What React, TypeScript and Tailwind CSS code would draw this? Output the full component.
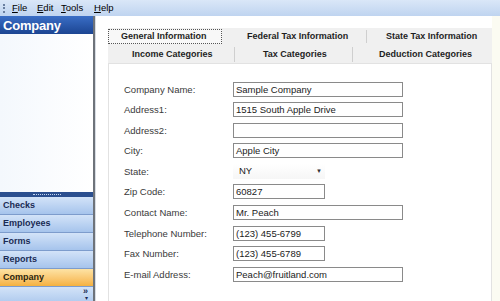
import React from "react";

const rows = [
  { label: "Company Name:", value: "Sample Company", w: "w-[170px]", h: "h-[20px]" },
  { label: "Address1:", value: "1515 South Apple Drive", w: "w-[170px]", h: "h-[21px]" },
  { label: "Address2:", value: "", w: "w-[170px]", h: "h-[20px]" },
  { label: "City:", value: "Apple City", w: "w-[170px]", h: "h-[21px]" },
  { label: "State:", value: "NY", w: "w-[92px]", h: "h-[20px]", combo: true },
  { label: "Zip Code:", value: "60827", w: "w-[92px]", h: "h-[21px]" },
  { label: "Contact Name:", value: "Mr. Peach", w: "w-[170px]", h: "h-[21px]" },
  { label: "Telephone Number:", value: "(123) 455-6799", w: "w-[92px]", h: "h-[20px]" },
  { label: "Fax Number:", value: "(123) 455-6789", w: "w-[92px]", h: "h-[21px]" },
  { label: "E-mail Address:", value: "Peach@fruitland.com", w: "w-[170px]", h: "h-[21px]" },
];

const navs = ["Checks", "Employees", "Forms", "Reports"];

function MenuItem({ first, rest, w }: { first: string; rest: string; w: string }) {
  return (
    <span className={`${w} text-[9.5px] text-black`}>
      <span className="underline">{first}</span>
      {rest}
    </span>
  );
}

export default function App() {
  return (
    <div
      className="w-[500px] h-[301px] overflow-hidden flex flex-col bg-white"
      style={{ fontFamily: "'Liberation Sans', Arial, sans-serif" }}
    >
      {/* Menu bar */}
      <div className="h-[16px] shrink-0 flex items-center bg-gradient-to-b from-[#dae7f8] to-[#bfd4f0] pl-[3px]">
        <div className="w-[2px] h-[9px] border-l-[2px] border-dotted border-[#6a7fa0] mr-[7px]" />
        <div className="flex items-center">
          <MenuItem first="F" rest="ile" w="w-[25px]" />
          <MenuItem first="E" rest="dit" w="w-[24px]" />
          <MenuItem first="T" rest="ools" w="w-[33px]" />
          <MenuItem first="H" rest="elp" w="w-[30px]" />
        </div>
      </div>

      <div className="flex flex-1 min-h-0">
        {/* Sidebar */}
        <div className="w-[93px] shrink-0 flex flex-col">
          <div className="h-[18px] shrink-0 bg-gradient-to-b from-[#3a6ec6] to-[#1c4592] flex items-center pl-[3px]">
            <span className="text-white font-bold text-[13px] leading-none tracking-[-0.2px]">Company</span>
          </div>
          <div className="flex-1 bg-gradient-to-r from-[#f4f8fd] to-white" />
          <div className="h-[5px] shrink-0 bg-[#2b4f8f] flex items-center justify-center">
            <div className="w-[28px] h-[1px] border-t border-dotted border-[#c5d6f0]" />
          </div>
          {navs.map((n) => (
            <div
              key={n}
              className="h-[18px] shrink-0 flex items-center pl-[3px] bg-gradient-to-b from-[#d3e3f8] to-[#a6c4ec] border-b border-[#7d9ccc]"
            >
              <span className="font-bold text-[9px] text-[#1a2b54]">{n}</span>
            </div>
          ))}
          <div className="h-[18px] shrink-0 flex items-center pl-[3px] bg-gradient-to-b from-[#fde3a4] to-[#f5b13e] border-b border-[#7d9ccc]">
            <span className="font-bold text-[9px] text-[#2a2410]">Company</span>
          </div>
          <div className="h-[14px] shrink-0 bg-gradient-to-b from-[#d3e3f8] to-[#b3cdef] flex flex-col items-end pr-[5px] leading-none">
            <span className="text-[9px] font-bold text-[#1a2b54] leading-[9px]">»</span>
            <span className="text-[6px] text-[#1a2b54] leading-[5px]">▾</span>
          </div>
        </div>

        {/* splitter border */}
        <div className="w-[2px] shrink-0 bg-[#6e737a]" />
        <div className="w-[1px] shrink-0 bg-[#d8dde4]" />

        {/* Main */}
        <div className="flex-1 flex flex-col pl-[12px] pt-[12px] bg-white">
          <div className="w-[384px] flex-1 flex flex-col">
            {/* Tab row 1 */}
            <div className="h-[17px] shrink-0 flex items-center text-[9px] font-bold text-[#1e1e1e] bg-[#f0f0f0]">
              <div className="w-[114px] h-[15px] border border-dotted border-[#555] bg-[#f8f8f8] flex items-center pl-[12px]">
                General Information
              </div>
              <div className="w-[145px] h-[13px] flex items-center pl-[25px] border-r border-[#cfcfcf]">
                Federal Tax Information
              </div>
              <div className="flex-1 h-[13px] flex items-center pl-[19px]">
                State Tax Information
              </div>
            </div>
            {/* Tab row 2 */}
            <div className="h-[18px] shrink-0 flex items-start pt-[2px] text-[9px] font-bold text-[#1e1e1e] bg-[#f0f0f0]">
              <div className="w-[127px] h-[15px] flex items-center pl-[24px] border-r border-[#cfcfcf]">
                Income Categories
              </div>
              <div className="w-[118px] h-[15px] flex items-center pl-[28px] border-r border-[#cfcfcf]">
                Tax Categories
              </div>
              <div className="flex-1 h-[15px] flex items-center pl-[26px]">
                Deduction Categories
              </div>
            </div>
            {/* Panel */}
            <div className="flex-1 bg-white border border-b-0 border-[#e2e2e2] pt-[18px] pl-[15px]">
              {rows.map((r) => (
                <div key={r.label} className={`${r.h} flex items-start`}>
                  <div className="w-[109px] h-[15px] flex items-center text-[9.5px] text-[#3a3a3a] leading-none">
                    {r.label}
                  </div>
                  {r.combo ? (
                    <div className={`${r.w} h-[15px] flex items-center justify-between pl-[6px] pr-[3px] bg-gradient-to-b from-white to-[#f6f6f6]`}>
                      <span className="text-[9.5px] text-[#222]">{r.value}</span>
                      <span className="text-[6px] text-[#333]">▼</span>
                    </div>
                  ) : (
                    <div className={`${r.w} h-[15px] border border-[#8a8a8a] bg-white flex items-center pl-[2px] text-[9.5px] text-[#222] leading-none`}>
                      {r.value}
                    </div>
                  )}
                </div>
              ))}
            </div>
          </div>
        </div>
        <div className="w-[8px] shrink-0 bg-[#fbfbf2]" />
      </div>
    </div>
  );
}
